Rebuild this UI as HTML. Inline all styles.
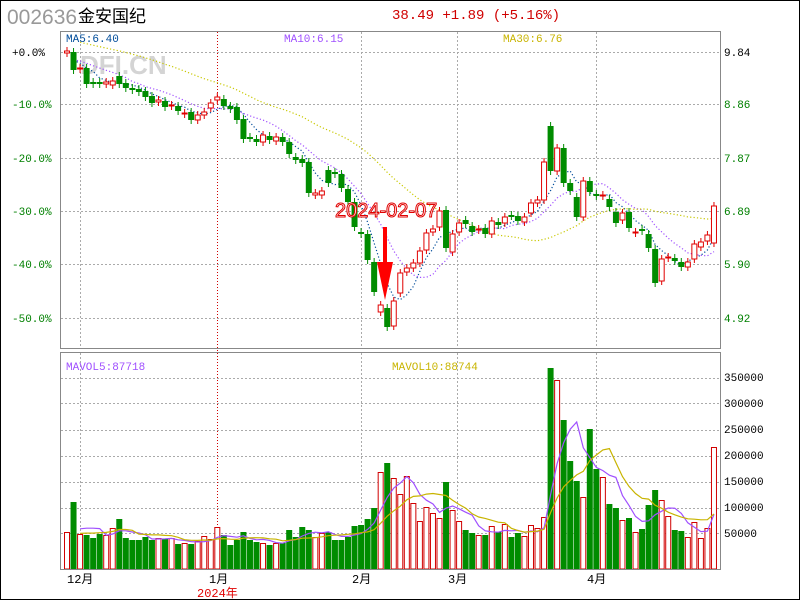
<!DOCTYPE html>
<html><head><meta charset="utf-8">
<style>
html,body{margin:0;padding:0;background:#fff;width:800px;height:600px;overflow:hidden}
svg{display:block}
text{font-family:"Liberation Mono","Noto Sans CJK SC",monospace}
</style></head><body>
<svg id="s" width="800" height="600" xmlns="http://www.w3.org/2000/svg">
<rect x="0.5" y="0.5" width="799" height="599" fill="#fff" stroke="#000"/>
<text x="7" y="24" font-size="21" fill="#999" style="font-family:'Liberation Sans',sans-serif">002636</text>
<text x="78" y="22" font-size="17" fill="#000" style="font-family:'Liberation Sans','Noto Sans CJK SC',sans-serif">金安国纪</text>
<text x="392" y="19" font-size="14" fill="#d00000">38.49 +1.89 (+5.16%)</text>
<g id="grid"></g>
<text x="80" y="74" font-size="26" font-weight="bold" fill="#d4d4d4" style="font-family:'Liberation Sans',sans-serif">DFI.CN</text>
<g id="ma"></g>
<g id="cd"></g>
<g id="vol"></g>
<rect x="60.5" y="31.5" width="660" height="317" fill="none" stroke="#888"/>
<rect x="60.5" y="352.5" width="660" height="217" fill="none" stroke="#888"/>
<text x="66" y="42" font-size="11" fill="#004c9a">MA5:6.40</text>
<text x="284" y="42" font-size="11" fill="#a050ff">MA10:6.15</text>
<text x="503" y="42" font-size="11" fill="#c8b400">MA30:6.76</text>
<text x="66" y="370" font-size="11" fill="#a050ff">MAVOL5:87718</text>
<text x="392" y="370" font-size="11" fill="#c8b400">MAVOL10:88744</text>
<g font-size="11">
<text x="12" y="56" fill="#000">+0.0%</text>
<text x="12" y="108" fill="#008000">-10.0%</text>
<text x="12" y="162" fill="#008000">-20.0%</text>
<text x="12" y="215" fill="#008000">-30.0%</text>
<text x="12" y="268" fill="#008000">-40.0%</text>
<text x="12" y="322" fill="#008000">-50.0%</text>
<text x="724" y="56" fill="#000">9.84</text>
<text x="724" y="108" fill="#008000">8.86</text>
<text x="724" y="162" fill="#008000">7.87</text>
<text x="724" y="215" fill="#008000">6.89</text>
<text x="724" y="268" fill="#008000">5.90</text>
<text x="724" y="322" fill="#008000">4.92</text>
<text x="724" y="381" fill="#000">350000</text>
<text x="724" y="407" fill="#000">300000</text>
<text x="724" y="433" fill="#000">250000</text>
<text x="724" y="459" fill="#000">200000</text>
<text x="724" y="485" fill="#000">150000</text>
<text x="724" y="511" fill="#000">100000</text>
<text x="724" y="537" fill="#000">50000</text>
</g>
<g font-size="12" fill="#000" style="font-family:'Liberation Sans','Noto Sans CJK SC',sans-serif">
<text x="67" y="583">12月</text>
<text x="209" y="583">1月</text>
<text x="352" y="583">2月</text>
<text x="448" y="583">3月</text>
<text x="587" y="583">4月</text>
<text x="197" y="597" fill="#e00000">2024年</text>
</g>
<text x="335" y="217" font-size="20" fill="#fff" stroke="#e00000" stroke-width="1" style="font-family:'Liberation Sans',sans-serif">2024-02-07</text>
<rect x="383" y="227" width="4" height="45" fill="#f00"/>
<polygon points="377,262 393,262 385,300" fill="#f00"/>
</svg>
<script>
var s=document.getElementById('s'),NS="http://www.w3.org/2000/svg";
function el(p,t,a){var e=document.createElementNS(NS,t);for(var k in a)e.setAttribute(k,a[k]);document.getElementById(p).appendChild(e);return e;}
// grid
[52,104,158,211,264,318].forEach(function(y){el('grid','line',{x1:61,x2:720,y1:y+.5,y2:y+.5,stroke:'#aaa','stroke-dasharray':'2,2'});});
[378,403,430,456,482,508,533].forEach(function(y){el('grid','line',{x1:61,x2:720,y1:y+.5,y2:y+.5,stroke:'#aaa','stroke-dasharray':'2,2'});});
[80,361,457,596].forEach(function(x){el('grid','line',{x1:x+.5,x2:x+.5,y1:32,y2:348,stroke:'#aaa','stroke-dasharray':'2,2'});el('grid','line',{x1:x+.5,x2:x+.5,y1:353,y2:569,stroke:'#aaa','stroke-dasharray':'2,2'});});
el('grid','line',{x1:217.5,x2:217.5,y1:32,y2:569,stroke:'#d00000','stroke-dasharray':'1,2'});
var OC=[[53,51],[52,70],[69,68],[68,84],[82,84],[82,84],[84,82],[85,81],[76,84],[83,88],[88,90],[89,92],[91,97],[96,103],[102,100],[101,107],[106,105],[106,111],[114,113],[112,120],[120,115],[115,112],[108,103],[100,97],
[99,106],[106,109],[107,120],[119,139],[137,138],[139,142],[142,135],[136,140],[141,137],[137,142],[142,154],[157,160],[159,163],[162,193],[193,195],[195,191],[183,170],[172,174],[174,188],[189,202],[202,227],[232,234],[234,260],[262,292],[312,305],[308,327],[326,301],[293,273],[272,268],[268,263],[263,251],[250,233],[232,229],[227,211],[210,248],[252,234],[232,223],[220,224],[226,232],[230,229],[228,234],[234,221],[222,225],[223,217],[215,216],[216,221],[222,217],[213,203],[203,200],[200,162],[126,171],[171,148],[148,183],[183,191],[197,217],[217,181],[181,192],[194,196],[196,195],[199,207],[212,223],[220,213],[212,228],[233,232],[229,231],[234,248],[249,283],[281,259],[258,257],[258,261],[262,267],[267,262],[259,244],[247,242],[241,235],[243,206]];
var VC="RGRGGGRRGGGGGGRGRGRGRRRRGGGGGGRGRGGGGGRRGGGGGGGGRGRRRRRRRRGRRGGRGRGRGGRRRRGRGGGRGGRGGRGRGGGRRGGRRRRR";
var VY=[532,502,534,535,538,534,535,528,519,538,540,540,537,540,538,539,538,544,543,544,541,536,539,527,535,545,540,532,540,542,543,545,543,543,530,537,527,530,537,533,532,540,540,537,526,525,519,508,472,463,478,494,476,503,521,507,513,518,482,510,521,530,533,535,535,526,532,524,537,533,536,525,528,517,368,380,420,461,481,497,429,469,477,504,508,520,518,532,529,505,490,500,516,530,531,537,522,538,528,447];
var cl=[];
for(var i=0;i<100;i++){var x=67+6.535*i,o=OC[i][0],c=OC[i][1],red=VC[i]=='R';
 var col=red?'#e00000':'#008c00';
 var t=Math.min(o,c),b=Math.max(o,c);if(b-t<1){b=t+1;}
 el('cd','line',{x1:x,x2:x,y1:t-4,y2:b+4,stroke:col});
 if(red) el('cd','rect',{x:x-2.5,y:t,width:5,height:Math.max(1,b-t),fill:'#fff',stroke:col});
 else el('cd','rect',{x:x-3,y:t,width:6,height:Math.max(2,b-t),fill:col});
 cl.push(c);
 var vy=VY[i];
 if(red) el('vol','rect',{x:x-2.5,y:vy+.5,width:5,height:569-vy-.5,fill:'#fff',stroke:'#d00000'});
 else el('vol','rect',{x:x-3,y:vy,width:6,height:569-vy,fill:'#008c00'});
}
function ma(a,n,pre){var r=[];for(var i=0;i<a.length;i++){var s=0,k=0;for(var j=Math.max(0,i-n+1);j<=i;j++){s+=a[j];k++;}var m=s/k;if(pre&&i<n)m=(s+pre*(n-k))/n;r.push(m);}return r;}
function line(g,a,col,dash,from){var d='';for(var i=from||0;i<a.length;i++){d+=(d?'L':'M')+(67+6.535*i).toFixed(1)+','+a[i].toFixed(1);}var at={d:d,fill:'none',stroke:col,'stroke-width':1.2};if(dash)at['stroke-dasharray']=dash;el(g,'path',at);}
line('ma',ma(cl,5),'#004c9a','1.2,2.2',1);
line('ma',ma(cl,10,60),'#a050ff','1.2,2.2',1);
line('ma',ma(cl,30,40),'#c8c800','1.2,2.2',2);
var vv=ma(VY,5,538),vt=ma(VY,10,538);
line('vol',vv,'#a050ff',null,2);
line('vol',vt,'#c8b400',null,2);
</script>
</body></html>
